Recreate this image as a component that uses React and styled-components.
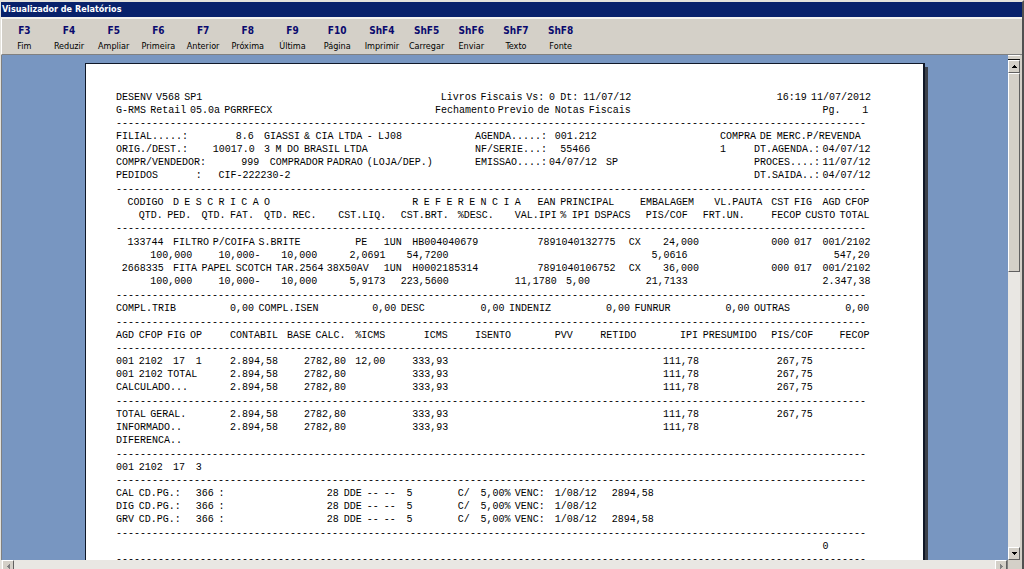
import React from "react";
import styled, { createGlobalStyle } from "styled-components";

const COLUMNS = 132;
const RULE_DASHES = 125;

const GlobalStyle = createGlobalStyle`
  *, *::before, *::after { box-sizing: border-box; }
  html, body { margin: 0; padding: 0; }
  body { background: #d4d0c8; font-family: "DejaVu Sans", sans-serif; overflow: hidden; }
`;

const Window = styled.div`
  display: flex;
  flex-direction: column;
  height: 100vh;
  border-top: 2px solid #e4e2dc;
  border-left: 1px solid #e4e2dc;
  border-right: 2px solid #505050;
  background: #d4d0c8;
`;

const TitleBar = styled.header`
  flex: none;
  height: 17px;
  border-bottom: 2px solid #f4f2ee;
  background: #08216b;
`;

const Title = styled.h1`
  margin: 0;
  padding-left: 1px;
  font: bold 9px/15px "DejaVu Sans Condensed", "DejaVu Sans", sans-serif;
  color: #fff;
`;

const Toolbar = styled.nav`
  flex: none;
  height: 36px;
  border-left: 1px solid #fff;
  border-bottom: 1px solid #808080;
`;

const ToolList = styled.div`
  display: grid;
  grid-template-columns: repeat(13, minmax(0, 1fr));
  max-width: 581px;
`;

const ToolButton = styled.button`
  display: flex;
  flex-direction: column;
  align-items: center;
  padding: 5px 0 0;
  border: 0;
  background: none;
  color: #000;
  font: 9px/16px "DejaVu Sans Condensed", "DejaVu Sans", sans-serif;
  white-space: nowrap;
`;

const Shortcut = styled.b`
  font: bold 10px/14px "DejaVu Sans Condensed", "DejaVu Sans", sans-serif;
  color: #0a0a6e;
`;

const Viewer = styled.main`
  display: flex;
  flex: 1;
  min-height: 0;
  border-left: 1px solid #808080;
`;

const Desk = styled.div`
  flex: 1;
  min-width: 0;
  padding: 8px 83px 0;
  overflow: hidden;
  background: #7896c1;
`;

const Sheet = styled.article`
  min-height: 100%;
  padding: 27px 55px 0 30px;
  border: 1px solid #101828;
  border-right-width: 2px;
  background: #fff;
  box-shadow: 3px 4px 0 #3c414a;
`;

const Section = styled.section`
  padding-bottom: ${(p) => (p.$loose ? 1 : 0)}px;
`;

const ReportTable = styled.table`
  display: block;
  padding-bottom: ${(p) => (p.$loose ? 1 : 0)}px;
  border-spacing: 0;
`;

const TableHead = styled.thead`
  display: block;
  padding-bottom: ${(p) => (p.$loose ? 1 : 0)}px;
`;

const TableBody = styled.tbody`
  display: block;
`;

const RuleRow = styled.tr`
  display: block;
`;

const RuleCell = styled.td`
  display: block;
  padding: 0;
`;

const lineStyle = `
  display: grid;
  grid-template-columns: repeat(${COLUMNS}, minmax(0, 1fr));
  height: 13px;
  font: 10px/13px "Liberation Mono", monospace;
  color: #000;
  white-space: pre;
`;

const TextLine = styled.div`${lineStyle}`;
const TableLine = styled.tr`${lineStyle}`;

const fieldStyle = (p) => `
  display: grid;
  grid-column: ${p.$start + 1} / span ${p.$span};
  grid-template-columns: repeat(${p.$span}, minmax(0, 1fr));
  padding: 0;
  font-weight: normal;
  text-align: left;
`;

const Field = styled.span`${fieldStyle}`;
const DataCell = styled.td`${fieldStyle}`;
const HeadCell = styled.th`${fieldStyle}`;

const Word = styled.span`
  grid-column-start: ${(p) => p.$start + 1};
  grid-row: 1;
`;

const Rule = styled.div`
  height: 13px;
  font: 10px/13px "Liberation Mono", monospace;
  color: #000;
  white-space: nowrap;
`;

const VerticalBar = styled.aside`
  display: flex;
  flex-direction: column;
  flex: none;
  width: 14px;
  border-right: 2px solid #d4d0c8;
  background: #e9e7e3;
`;

const Splitter = styled.div`
  flex: none;
  height: 5px;
  border-top: 1px solid #fff;
  border-bottom: 1px solid #101010;
  background: #d4d0c8;
`;

const ArrowButton = styled.button`
  display: flex;
  align-items: center;
  justify-content: center;
  flex: none;
  width: 12px;
  height: 13px;
  padding: 0;
  border: 1px solid;
  border-color: #fff #606060 #606060 #fff;
  background: #d4d0c8;
`;

const Track = styled.div`
  flex: 1;
`;

const Thumb = styled.div`
  height: 42%;
  border: 1px solid;
  border-color: #fff #606060 #606060 #fff;
  background: #d4d0c8;
`;

const HorizontalBar = styled.footer`
  display: flex;
  flex: none;
  height: 9px;
  padding-left: 1px;
  overflow: hidden;
  background: #e9e7e3;
`;

const Corner = styled.div`
  flex: none;
  width: 15px;
  border-left: 1px solid #808080;
  background: #d4d0c8;
`;

const ARROWS = {
  up: "M3 2h1v1h1v1h1v1H1V4h1V3h1z",
  down: "M1 2h5v1H5v1H4v1H3V4H2V3H1z",
  left: "M2 3h1V2h1V1h1v5H4V5H3V4H2z",
  right: "M2 1h1v1h1v1h1v1H4v1H3v1H2z",
};

function Arrow({ to, color = "#000" }) {
  return (
    <svg width="7" height="7" viewBox="0 0 7 7" aria-hidden="true">
      <path d={ARROWS[to]} fill={color} shapeRendering="crispEdges" />
    </svg>
  );
}

const TOOLS = [
  ["F3", "Fim"], ["F4", "Reduzir"], ["F5", "Ampliar"], ["F6", "Primeira"],
  ["F7", "Anterior"], ["F8", "Próxima"], ["F9", "Última"], ["F10", "Página"],
  ["ShF4", "Imprimir"], ["ShF5", "Carregar"], ["ShF6", "Enviar"],
  ["ShF7", "Texto"], ["ShF8", "Fonte"],
];

// Each line is a list of [print column, text] fields on the 132-column form.
const REPORT = [
  { lines: [
    [[0, "DESENV V568 SP1"], [57, "Livros Fiscais Vs: 0 Dt: 11/07/12"], [116, "16:19 11/07/2012"]],
    [[0, "G-RMS Retail 05.0a PGRRFECX"], [56, "Fechamento Previo de Notas Fiscais"], [124, "Pg."], [131, "1"]],
  ] },
  { loose: true, lines: [
    [[0, "FILIAL.....:"], [21, "8.6"], [26, "GIASSI & CIA LTDA - LJ08"], [63, "AGENDA.....:"], [77, "001.212"], [106, "COMPRA DE MERC.P/REVENDA"]],
    [[0, "ORIG./DEST.:"], [17, "10017.0"], [26, "3 M DO BRASIL LTDA"], [63, "NF/SERIE...:"], [78, "55466"], [106, "1"], [112, "DT.AGENDA.: 04/07/12"]],
    [[0, "COMPR/VENDEDOR:"], [22, "999"], [27, "COMPRADOR PADRAO (LOJA/DEP.)"], [63, "EMISSAO....: 04/07/12"], [86, "SP"], [112, "PROCES....: 11/07/12"]],
    [[0, "PEDIDOS"], [14, ":"], [18, "CIF-222230-2"], [112, "DT.SAIDA..: 04/07/12"]],
  ] },
  { loose: true, looseHead: true, head: [
    [[2, "CODIGO"], [10, "D E S C R I C A O"], [52, "R E F E R E N C I A"], [74, "EAN PRINCIPAL"], [92, "EMBALAGEM"], [105, "VL.PAUTA"], [115, "CST FIG"], [124, "AGD CFOP"]],
    [[4, "QTD. PED."], [15, "QTD. FAT."], [26, "QTD. REC."], [39, "CST.LIQ."], [50, "CST.BRT."], [60, "%DESC."], [70, "VAL.IPI"], [78, "% IPI"], [84, "DSPACS"], [93, "PIS/COF"], [103, "FRT.UN."], [115, "FECOP"], [121, "CUSTO TOTAL"]],
  ], body: [
    [[2, "133744"], [10, "FILTRO P/COIFA S.BRITE"], [42, "PE"], [47, "1UN"], [52, "HB004040679"], [74, "7891040132775"], [90, "CX"], [96, "24,000"], [115, "000 017"], [124, "001/2102"]],
    [[6, "100,000"], [18, "10,000-"], [29, "10,000"], [41, "2,0691"], [51, "54,7200"], [94, "5,0616"], [126, "547,20"]],
    [[1, "2668335"], [10, "FITA PAPEL SCOTCH TAR.2564 38X50AV"], [47, "1UN"], [52, "H0002185314"], [74, "7891040106752"], [90, "CX"], [96, "36,000"], [115, "000 017"], [124, "001/2102"]],
    [[6, "100,000"], [18, "10,000-"], [29, "10,000"], [41, "5,9173"], [50, "223,5600"], [70, "11,1780"], [79, "5,00"], [93, "21,7133"], [124, "2.347,38"]],
  ] },
  { loose: true, lines: [
    [[0, "COMPL.TRIB"], [20, "0,00"], [25, "COMPL.ISEN"], [45, "0,00"], [50, "DESC"], [64, "0,00"], [69, "INDENIZ"], [86, "0,00"], [91, "FUNRUR"], [107, "0,00"], [112, "OUTRAS"], [128, "0,00"]],
  ] },
  { loose: true, head: [
    [[0, "AGD CFOP FIG OP"], [20, "CONTABIL"], [30, "BASE CALC."], [42, "%ICMS"], [54, "ICMS"], [63, "ISENTO"], [77, "PVV"], [85, "RETIDO"], [99, "IPI"], [103, "PRESUMIDO"], [115, "PIS/COF"], [127, "FECOP"]],
  ], body: [
    [[0, "001 2102  17  1"], [20, "2.894,58"], [33, "2782,80"], [42, "12,00"], [52, "333,93"], [96, "111,78"], [116, "267,75"]],
    [[0, "001 2102 TOTAL"], [20, "2.894,58"], [33, "2782,80"], [52, "333,93"], [96, "111,78"], [116, "267,75"]],
    [[0, "CALCULADO..."], [20, "2.894,58"], [33, "2782,80"], [52, "333,93"], [96, "111,78"], [116, "267,75"]],
  ] },
  { loose: true, body: [
    [[0, "TOTAL GERAL."], [20, "2.894,58"], [33, "2782,80"], [52, "333,93"], [96, "111,78"], [116, "267,75"]],
    [[0, "INFORMADO.."], [20, "2.894,58"], [33, "2782,80"], [52, "333,93"], [96, "111,78"]],
    [[0, "DIFERENCA.."]],
  ] },
  { lines: [[[0, "001 2102  17  3"]]] },
  { loose: true, body: [
    [[0, "CAL CD.PG.:"], [14, "366 :"], [37, "28 DDE -- --"], [51, "5"], [60, "C/"], [64, "5,00% VENC:"], [77, "1/08/12"], [87, "2894,58"]],
    [[0, "DIG CD.PG.:"], [14, "366 :"], [37, "28 DDE -- --"], [51, "5"], [60, "C/"], [64, "5,00% VENC:"], [77, "1/08/12"]],
    [[0, "GRV CD.PG.:"], [14, "366 :"], [37, "28 DDE -- --"], [51, "5"], [60, "C/"], [64, "5,00% VENC:"], [77, "1/08/12"], [87, "2894,58"]],
  ] },
  { lines: [[[124, "0"]]] },
];

function words(text) {
  return [...text.matchAll(/\S+/g)].map((m) => (
    <Word key={m.index} $start={m.index}>{m[0]}</Word>
  ));
}

function Line({ fields, line: LineTag, cell: Cell }) {
  return (
    <LineTag>
      {fields.map(([start, text]) => (
        <Cell key={start} $start={start} $span={text.length}>{words(text)}</Cell>
      ))}
    </LineTag>
  );
}

function DashedRule() {
  return <Rule role="separator">{"-".repeat(RULE_DASHES)}</Rule>;
}

function TableBlock({ block }) {
  return (
    <ReportTable $loose={block.loose}>
      {block.head && (
        <TableHead $loose={block.looseHead}>
          {block.head.map((fields, i) => (
            <Line key={i} fields={fields} line={TableLine} cell={HeadCell} />
          ))}
          <RuleRow>
            <RuleCell><DashedRule /></RuleCell>
          </RuleRow>
        </TableHead>
      )}
      <TableBody>
        {block.body.map((fields, i) => (
          <Line key={i} fields={fields} line={TableLine} cell={DataCell} />
        ))}
      </TableBody>
    </ReportTable>
  );
}

function Block({ block }) {
  if (block.body) return <TableBlock block={block} />;
  return (
    <Section $loose={block.loose}>
      {block.lines.map((fields, i) => (
        <Line key={i} fields={fields} line={TextLine} cell={Field} />
      ))}
    </Section>
  );
}

export default function App() {
  return (
    <>
      <GlobalStyle />
      <Window>
        <TitleBar><Title>Visualizador de Relatórios</Title></TitleBar>
        <Toolbar aria-label="Comandos">
          <ToolList>
            {TOOLS.map(([key, label]) => (
              <ToolButton key={key} type="button">
                <Shortcut>{key}</Shortcut>
                <span>{label}</span>
              </ToolButton>
            ))}
          </ToolList>
        </Toolbar>
        <Viewer>
          <Desk>
            <Sheet>
              {REPORT.map((block, i) => (
                <React.Fragment key={i}>
                  <Block block={block} />
                  <DashedRule />
                </React.Fragment>
              ))}
            </Sheet>
          </Desk>
          <VerticalBar>
            <Splitter />
            <ArrowButton type="button" aria-label="Rolar para cima"><Arrow to="up" /></ArrowButton>
            <Track><Thumb /></Track>
            <ArrowButton type="button" aria-label="Rolar para baixo"><Arrow to="down" /></ArrowButton>
          </VerticalBar>
        </Viewer>
        <HorizontalBar>
          <ArrowButton type="button" aria-label="Rolar para a esquerda"><Arrow to="left" color="#808080" /></ArrowButton>
          <Track />
          <ArrowButton type="button" aria-label="Rolar para a direita"><Arrow to="right" color="#808080" /></ArrowButton>
          <Corner />
        </HorizontalBar>
      </Window>
    </>
  );
}
